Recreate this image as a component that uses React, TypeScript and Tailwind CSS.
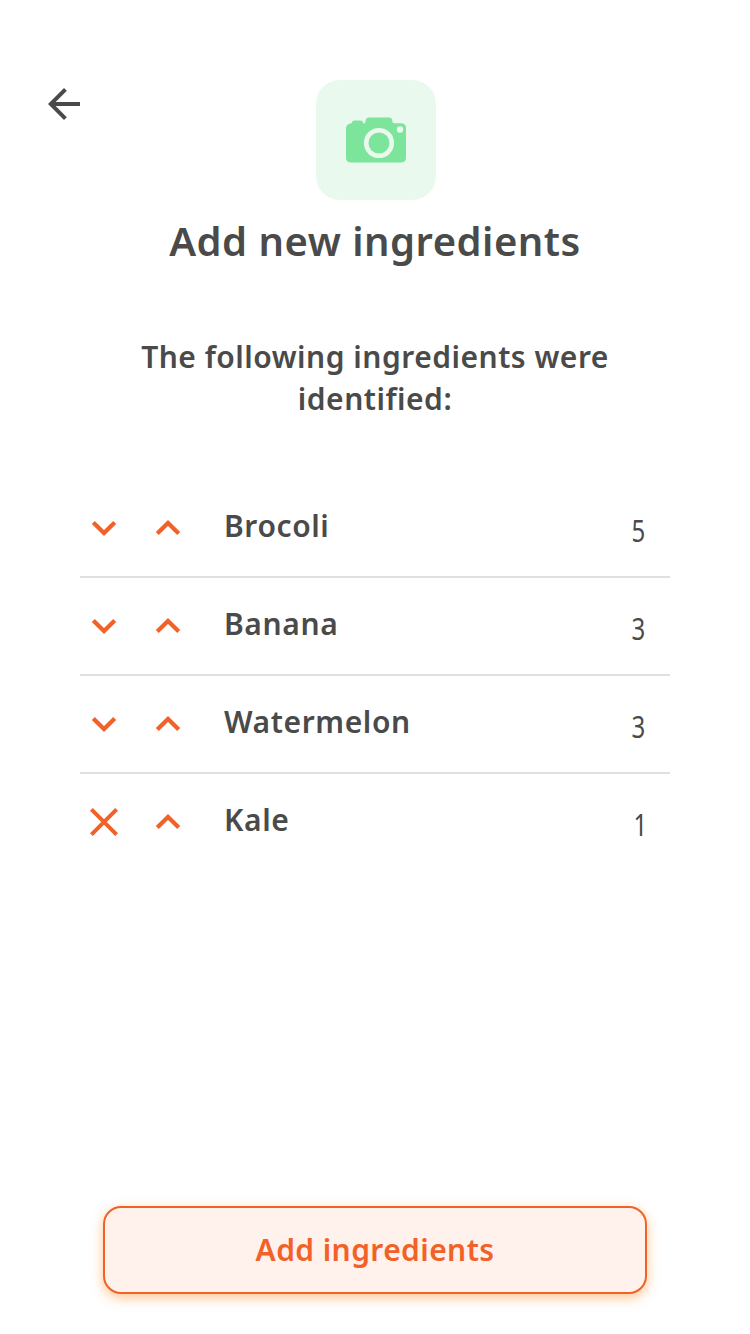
type Ingredient = { name: string; count: number };

const ingredients: Ingredient[] = [
  { name: "Brocoli", count: 5 },
  { name: "Banana", count: 3 },
  { name: "Watermelon", count: 3 },
  { name: "Kale", count: 1 },
];

function BackArrow() {
  return (
    <svg width="32" height="32" viewBox="0 0 32 32" fill="#4a4a4a">
      <path d="M32 14H7.660L18.840 2.820L16 0L0 16L16 32L18.820 29.180L7.660 18H32Z" />
    </svg>
  );
}

function Camera() {
  return (
    <svg width="60" height="46" viewBox="0 0 60 46">
      <path
        d="M5 6.200Q6 6 6 5.500Q6 3.500 8.500 3.500H14.500Q17 3.500 17 5.500Q17.200 6.700 18.300 6.500Q19.500 6.200 19.500 4.500V4Q20 .5 23 .5H43Q46 .5 46.300 3.500V4.500Q46.500 6.200 48.500 6.200H55Q60 6.200 60 11V40.500Q60 45.500 55 45.500H5Q0 45.500 0 40.500V11.500Q0 7 5 6.200Z"
        fill="#7de49b"
      />
      <circle cx="33" cy="26" r="12.800" fill="none" stroke="#e9f9ee" strokeWidth="4.600" />
      <circle cx="54" cy="12.500" r="3.200" fill="#e9f9ee" />
    </svg>
  );
}

function Chevron({ up = false }: { up?: boolean }) {
  return (
    <svg width="32" height="32" viewBox="0 0 32 32" fill="none" stroke="#f26127" strokeWidth="4.200">
      <path d={up ? "M5.300 21.600L16 10.900L26.700 21.600" : "M5.300 10.400L16 21.100L26.700 10.400"} />
    </svg>
  );
}

function Cross() {
  return (
    <svg width="32" height="32" viewBox="0 0 32 32" fill="none" stroke="#f26127" strokeWidth="4">
      <path d="M3.400 3.400L28.600 28.600M28.600 3.400L3.400 28.600" />
    </svg>
  );
}

export default function App() {
  return (
    <main className="flex h-[1334px] w-[750px] flex-col bg-white font-['Noto_Sans',sans-serif] font-semibold text-[#4a4a4a]">
      <header className="mt-20 grid h-[120px] grid-cols-[316px_120px_1fr]">
        <button aria-label="Back" className="mt-2 ml-12 h-8 w-8">
          <BackArrow />
        </button>
        <div className="flex items-center justify-center rounded-[24px] bg-[#e9f9ee]">
          <Camera />
        </div>
      </header>
      <h1 className="mt-[13px] text-center text-[40px] leading-[56px] tracking-[0.5px] whitespace-nowrap">
        Add new ingredients
      </h1>
      <p className="mt-[67px] text-center text-[30px] leading-[42px] tracking-[0.5px]">
        The following ingredients were
        <br />
        identified:
      </p>
      <ul className="mt-[60px] ml-20 w-[590px]">
        {ingredients.map((item) => (
          <li
            key={item.name}
            className="flex h-[98px] border-b-2 border-[#e0e0e0] pt-[32px] pr-[25px] pl-2 last:border-b-0"
          >
            <button aria-label="Decrease" className="mr-8 h-8 w-8">
              {item.count === 1 ? <Cross /> : <Chevron />}
            </button>
            <button aria-label="Increase" className="h-8 w-8">
              <Chevron up />
            </button>
            <span className="-mt-[7px] ml-[40px] text-[30px] leading-[42px] tracking-[0.6px]">{item.name}</span>
            <span
              className={
                item.count === 1
                  ? "-mt-[2px] -mr-[2px] ml-auto origin-right scale-x-80 text-[30px] leading-[42px] font-normal"
                  : "-mt-[2px] ml-auto origin-right scale-x-80 text-[30px] leading-[42px] font-normal"
              }
            >
              {item.count}
            </span>
          </li>
        ))}
      </ul>
      <button className="mx-auto mt-auto mb-10 flex h-[88px] w-[544px] items-center justify-center rounded-[18px] border-2 border-[#f26127] bg-[#fff1ec] pb-[2px] text-[30px] tracking-[0.4px] text-[#f26127] shadow-[0_4px_12px_rgba(255,145,40,0.5)]">
        Add ingredients
      </button>
    </main>
  );
}
